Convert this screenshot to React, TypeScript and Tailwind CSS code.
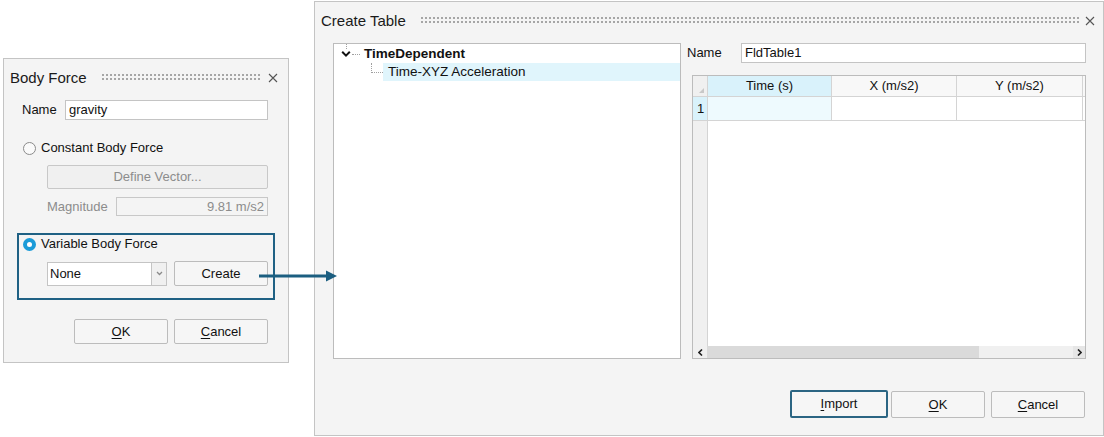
import React from "react";

const Grip = ({ className = "" }: { className?: string }) => (
  <div
    className={
      "h-[8px] bg-[radial-gradient(circle_at_1px_1px,#a6a6a6_0.9px,transparent_1.2px)] bg-[length:4px_4px] " +
      className
    }
  />
);

const CloseX = () => (
  <svg width="10" height="10" viewBox="0 0 10 10" className="shrink-0">
    <path d="M1 1 L9 9 M9 1 L1 9" stroke="#555" strokeWidth="1.1" fill="none" />
  </svg>
);

const Btn = ({
  children,
  className = "",
  primary = false,
}: {
  children: React.ReactNode;
  className?: string;
  primary?: boolean;
}) => (
  <div
    className={
      "flex items-center justify-center rounded-[2px] bg-[#f6f6f6] text-[13px] text-[#111] " +
      (primary ? "border-2 border-[#2b6583] " : "border border-[#bcbcbc] ") +
      className
    }
  >
    {children}
  </div>
);

function BodyForce() {
  return (
    <div className="absolute left-[3px] top-[58px] flex h-[305px] w-[286px] flex-col border border-[#c4c4c4] bg-[#f4f4f4]">
      <div className="flex h-[38px] items-center pl-[6px] pr-[10px]">
        <span className="text-[15px] text-[#1a1a1a]">Body Force</span>
        <Grip className="ml-[15px] mr-[6px] flex-1" />
        <CloseX />
      </div>
      <div className="mt-[3px] flex h-[20px] items-center pl-[18px] pr-[20px]">
        <span className="w-[43px] text-[13px]">Name</span>
        <div className="flex h-[20px] flex-1 items-center border border-[#c4c4c4] bg-white pl-[3px] text-[13px]">
          gravity
        </div>
      </div>
      <div className="mt-[18px] flex h-[20px] items-center pl-[19px]">
        <div className="h-[13px] w-[13px] rounded-full border border-[#8a8a8a] bg-[#fafafa]" />
        <span className="ml-[5px] text-[13px]">Constant Body Force</span>
      </div>
      <div className="ml-[43px] mr-[20px] mt-[7px] flex h-[24px] items-center justify-center rounded-[2px] border border-[#c8c8c8] bg-[#f0f0f0] text-[13px] text-[#8c8c8c]">
        Define Vector...
      </div>
      <div className="ml-[43px] mr-[20px] mt-[8px] flex h-[19px] items-center">
        <span className="w-[69px] text-[13px] text-[#8c8c8c]">Magnitude</span>
        <div className="flex h-[19px] flex-1 items-center justify-end border border-[#c8c8c8] bg-[#f4f4f4] pr-[3px] text-[13px] text-[#8c8c8c]">
          9.81 m/s2
        </div>
      </div>
      <div className="mx-[13px] mt-[17px] flex h-[67px] flex-col border-2 border-[#1f6184] pl-[4px]">
        <div className="flex h-[18px] items-center">
          <div className="h-[13px] w-[13px] rounded-full border-[4px] border-[#1b9bd8] bg-white" />
          <span className="ml-[5px] text-[13px]">Variable Body Force</span>
        </div>
        <div className="ml-[24px] mt-[8px] flex h-[25px] items-center">
          <div className="flex h-[24px] w-[120px] border border-[#c4c4c4] bg-white">
            <div className="flex flex-1 items-center pl-[2px] text-[13px]">None</div>
            <div className="flex w-[15px] items-center justify-center border-l border-[#c4c4c4] bg-[#f0f0f0]">
              <svg width="7" height="5" viewBox="0 0 7 5">
                <path d="M1 1 L3.5 3.5 L6 1" stroke="#8a8a8a" strokeWidth="1.3" fill="none" />
              </svg>
            </div>
          </div>
          <Btn className="ml-[7px] h-[25px] w-[94px]">Create</Btn>
        </div>
      </div>
      <div className="mt-[19px] flex justify-end gap-[6px] pr-[20px]">
        <Btn className="h-[25px] w-[94px]">
          <span className="underline underline-offset-2">O</span>K
        </Btn>
        <Btn className="h-[25px] w-[94px]">
          <span className="underline underline-offset-2">C</span>ancel
        </Btn>
      </div>
    </div>
  );
}

function Tree() {
  return (
    <div className="relative h-[316px] w-[348px] border border-[#bcbcbc] bg-white pt-[1px]">
      <div className="relative flex h-[18px] items-center pl-[7px]">
        <span className="absolute left-[12px] top-[-1px] h-[5px] border-l border-dotted border-[#a0a0a0]" />
        <svg width="10" height="8" viewBox="0 0 10 8" className="shrink-0">
          <path d="M1.2 1.8 L5 5.6 L8.8 1.8" stroke="#111" strokeWidth="2" fill="none" />
        </svg>
        <span className="ml-[1px] w-[8px] border-t border-dotted border-[#a0a0a0]" />
        <span className="ml-[4px] text-[13.5px] font-bold text-[#111]">TimeDependent</span>
      </div>
      <div className="flex h-[18px] items-stretch pl-[37px]">
        <span className="h-[10px] w-[12px] self-start border-b border-l border-dotted border-[#a0a0a0]" />
        <div className="flex flex-1 items-center bg-[#e0f5fc] pl-[5px] text-[13.5px] text-[#111]">
          Time-XYZ Acceleration
        </div>
      </div>
    </div>
  );
}

function Table() {
  return (
    <div className="ml-[5px] mt-[12px] flex h-[284px] flex-col border border-[#bcbcbc] bg-white">
      <div className="flex h-[21px] border-b border-[#d4d4d4] text-[13px] text-[#111]">
        <div className="relative w-[15px] border-r border-[#d4d4d4] bg-[#f0f0f0]">
          <svg width="5" height="5" viewBox="0 0 5 5" className="absolute bottom-[3px] right-[3px]">
            <path d="M5 0 L5 5 L0 5 Z" fill="#c8c8c8" />
          </svg>
        </div>
        <div className="flex w-[124px] items-center justify-center border-r border-[#d4d4d4] bg-[#d9f2fb]">Time (s)</div>
        <div className="flex w-[125px] items-center justify-center border-r border-[#d4d4d4] bg-[#f8f8f8]">X (m/s2)</div>
        <div className="flex w-[126px] items-center justify-center border-r border-[#d4d4d4] bg-[#f8f8f8]">Y (m/s2)</div>
        <div className="flex-1 bg-[#f8f8f8]" />
      </div>
      <div className="flex h-[24px] border-b border-[#d4d4d4] text-[13px] text-[#111]">
        <div className="flex w-[15px] items-center pl-[4px] border-r border-[#d4d4d4] bg-[#d9f2fb]">1</div>
        <div className="w-[124px] border-r border-[#d4d4d4] bg-[#eefafe]" />
        <div className="w-[125px] border-r border-[#d4d4d4]" />
        <div className="w-[126px] border-r border-[#d4d4d4]" />
        <div className="flex-1" />
      </div>
      <div className="flex flex-1">
        <div className="w-[15px] border-r border-[#d4d4d4] bg-[#f0f0f0]" />
        <div className="flex-1" />
      </div>
      <div className="flex h-[12px] bg-[#f0f0f0]">
        <div className="flex w-[14px] items-center justify-center">
          <svg width="5" height="7" viewBox="0 0 5 7">
            <path d="M4 0.5 L1 3.5 L4 6.5" stroke="#222" strokeWidth="1.6" fill="none" />
          </svg>
        </div>
        <div className="w-[272px] bg-[#dadada]" />
        <div className="flex-1" />
        <div className="flex w-[12px] items-center justify-center bg-[#e6e6e6]">
          <svg width="5" height="7" viewBox="0 0 5 7">
            <path d="M1 0.5 L4 3.5 L1 6.5" stroke="#222" strokeWidth="1.6" fill="none" />
          </svg>
        </div>
      </div>
    </div>
  );
}

function CreateTable() {
  return (
    <div className="absolute left-[314px] top-[1px] flex h-[435px] w-[790px] flex-col border border-[#c4c4c4] bg-[#f4f4f4]">
      <div className="flex h-[38px] items-center pl-[6px] pr-[8px]">
        <span className="text-[15px] text-[#1a1a1a]">Create Table</span>
        <Grip className="ml-[15px] mr-[6px] flex-1" />
        <CloseX />
      </div>
      <div className="mt-[3px] flex pl-[18px] pr-[17px]">
        <Tree />
        <div className="ml-[6px] flex flex-1 flex-col">
          <div className="flex h-[20px] items-center">
            <span className="w-[54px] text-[13px] text-[#111]">Name</span>
            <div className="flex h-[20px] flex-1 items-center border border-[#c4c4c4] bg-white pl-[3px] text-[13px] text-[#111]">
              FldTable1
            </div>
          </div>
          <Table />
        </div>
      </div>
      <div className="mt-[31px] flex justify-end pr-[18px]">
        <Btn primary className="h-[28px] w-[98px]">
          <span className="underline underline-offset-2">I</span>mport
        </Btn>
        <Btn className="ml-[3px] mt-[1px] h-[27px] w-[94px]">
          <span className="underline underline-offset-2">O</span>K
        </Btn>
        <Btn className="ml-[6px] mt-[1px] h-[27px] w-[94px]">
          <span className="underline underline-offset-2">C</span>ancel
        </Btn>
      </div>
    </div>
  );
}

export default function App() {
  return (
    <div className="relative h-[437px] w-[1104px] overflow-hidden bg-white font-['Liberation_Sans',Arial,sans-serif] text-[#111]">
      <BodyForce />
      <CreateTable />
      <svg className="absolute left-[258px] top-[269px]" width="80" height="14" viewBox="0 0 80 14">
        <path d="M1 7 L70 7" stroke="#1b5e80" strokeWidth="3" />
        <path d="M68 1.5 L79 7 L68 12.5 Z" fill="#1b5e80" />
      </svg>
    </div>
  );
}
